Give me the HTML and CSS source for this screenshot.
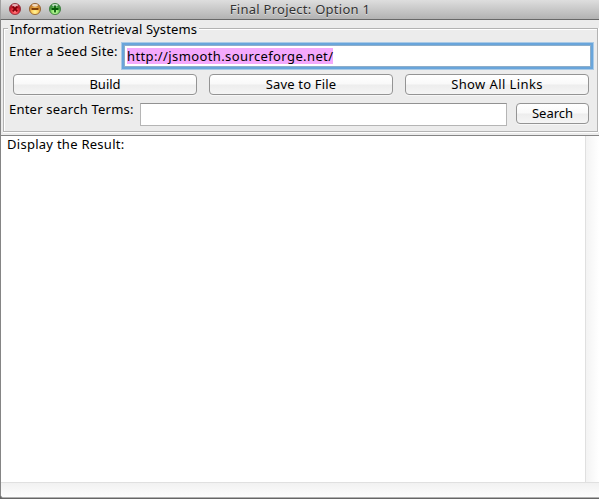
FILE: index.html
```html
<!DOCTYPE html>
<html lang="en">
<head>
<meta charset="utf-8">
<title>Final Project: Option 1</title>
<link rel="stylesheet" href="styles.css">
</head>
<body>
<div class="window">
  <header class="titlebar">
    <div class="controls">
      <svg viewBox="0 0 14 14"><defs>
        <radialGradient id="r" cy=".75"><stop offset="0" stop-color="#ff8484"/><stop offset=".6" stop-color="#ee3642"/><stop offset="1" stop-color="#b81c2c"/></radialGradient>
        <radialGradient id="y" cy=".75"><stop offset="0" stop-color="#fff49c"/><stop offset=".6" stop-color="#fccf5c"/><stop offset="1" stop-color="#cd8430"/></radialGradient>
        <radialGradient id="g" cy=".75"><stop offset="0" stop-color="#d0ffa8"/><stop offset=".6" stop-color="#88e06c"/><stop offset="1" stop-color="#3c9440"/></radialGradient></defs>
        <circle cx="7" cy="7" r="5.6" fill="url(#r)" stroke="#8d3038" stroke-width=".8"/><ellipse cx="7" cy="3.3" rx="3" ry="1.4" fill="#fff" opacity=".65"/><path d="M4.7 4.7l4.6 4.6M9.3 4.7L4.7 9.3" stroke="#7d0008" stroke-width="1.8"/></svg>
      <svg viewBox="0 0 14 14"><circle cx="7" cy="7" r="5.6" fill="url(#y)" stroke="#8c5929" stroke-width=".8"/><ellipse cx="7" cy="3.3" rx="3" ry="1.4" fill="#fff" opacity=".7"/><path d="M3.5 7h7" stroke="#733000" stroke-width="1.8"/></svg>
      <svg viewBox="0 0 14 14"><circle cx="7" cy="7" r="5.6" fill="url(#g)" stroke="#38783a" stroke-width=".8"/><ellipse cx="7" cy="3.3" rx="3" ry="1.4" fill="#fff" opacity=".7"/><path d="M3.5 7h7M7 3.5v7" stroke="#075b0c" stroke-width="1.8"/></svg>
    </div>
    <h1 class="title">Final Project: Option 1</h1>
  </header>
  <main class="content">
    <section class="group">
      <h2 class="legend"><span class="t-legend">Information Retrieval Systems</span></h2>
      <div class="row seed-row">
        <label class="seed-label">Enter a Seed Site:</label>
        <div class="seed-field"><span class="selection">http://jsmooth.sourceforge.net/</span></div>
      </div>
      <div class="row button-row">
        <button class="btn t-build">Build</button>
        <button class="btn t-save">Save to File</button>
        <button class="btn t-links">Show All Links</button>
      </div>
      <div class="row search-row">
        <label class="search-label">Enter search Terms:</label>
        <div class="search-field"></div>
        <button class="btn btn-search t-search">Search</button>
      </div>
    </section>
    <section class="results">
      <div class="output"><span class="t-result">Display the Result:</span></div>
      <div class="track-v"></div>
      <div class="track-h"></div>
    </section>
  </main>
</div>
</body>
</html>
```
FILE: styles.css
```css
* { box-sizing: border-box; }
body {
  margin: 0;
  width: 599px;
  height: 499px;
  overflow: hidden;
  background: #666;
  color: #000;
  font: 13px/16px "Noto Sans", sans-serif;
}
.window { height: 499px; display: flex; flex-direction: column; }
.titlebar {
  height: 20px;
  flex: none;
  display: grid;
  grid-template-columns: 100px 1fr 100px;
  background: linear-gradient(#dedede, #b2b2b2);
  border-bottom: 1px solid #686868;
  border-left: 1px solid #a0a0a0;
}
.controls { display: flex; gap: 6px; padding: 2px 0 0 7px; }
.controls svg { width: 14px; height: 14px; flex: none; }
.title {
  margin: 0;
  padding-top: 1px;
  font-size: 13px;
  font-weight: 400;
  line-height: 16px;
  letter-spacing: .26px;
  text-align: center;
  color: #333;
  text-shadow: 0 1px 0 rgba(255, 255, 255, .5);
  white-space: nowrap;
}
.content {
  flex: 1;
  display: flex;
  flex-direction: column;
  min-height: 0;
  margin-bottom: 1px;
  border-left: 1px solid #858585;
  border-bottom: 1px solid #b0b0b0;
  border-radius: 0 0 0 4px;
  background: #ececec;
  overflow: hidden;
}
.group {
  flex: none;
  height: 104px;
  margin: 8px 1px 3px 2px;
  border: 1px solid #b3b3b3;
  box-shadow: inset 1px 1px #fff, 0 1px #fff, 1px 0 #fff;
}
.legend {
  height: 14px;
  margin: -7px 0 0 4px;
  font-size: 13px;
  font-weight: 400;
  line-height: 14px;
}
.legend span { display: inline-block; background: #ececec; padding: 0 2px; letter-spacing: .11px; }
.row { display: flex; white-space: nowrap; }
.seed-row { height: 27px; margin: 8px 6px 0 5px; }
.seed-label { width: 115px; flex: none; margin-top: -1px; letter-spacing: .15px; }
.seed-field {
  flex: 1;
  height: 22px;
  margin: 1px 0 0;
  padding: 2px;
  border: 1px solid #8daeca;
  background: #fff;
  box-shadow: 0 0 0 2px #69a5db, 0 0 0 3px #a9cae6;
}
.selection { display: inline-block; height: 16px; line-height: 16px; background: #f4a9fc; letter-spacing: .39px; }
.button-row { gap: 12px; margin: 3px 8px 0 9px; }
.btn {
  flex: 1;
  height: 21px;
  padding: 0 0 1px;
  border: 1px solid #949494;
  border-radius: 4px;
  background: linear-gradient(#fff 0, #f9f9f9 48%, #ededed 52%, #f5f5f5);
  color: #000;
  font: 13px/18px "Noto Sans", sans-serif;
  box-shadow: 0 1px 0 rgba(255, 255, 255, .6);
}
.t-save { letter-spacing: .17px; }
.t-links { letter-spacing: .4px; }
.search-row { margin: 8px 8px 0 5px; }
.search-label { width: 131px; flex: none; margin-top: -2px; letter-spacing: .22px; }
.search-field {
  flex: 1;
  height: 23px;
  margin-right: 9px;
  border: 1px solid #b5b5b5;
  border-top-color: #929292;
  background: #fff;
}
.btn-search { flex: 0 0 73px; }
.results {
  flex: 1;
  min-height: 0;
  display: grid;
  grid-template: 1fr 15px / 1fr 14px;
  border-top: 1px solid #858585;
  background: #fff;
}
.output { padding: 0 6px; background: #fff; letter-spacing: .27px; }
.track-v { border-left: 1px solid #e0e0e0; background: linear-gradient(90deg, #f3f3f3, #fff); }
.track-h { grid-column: 1 / 3; border-top: 1px solid #e0e0e0; background: linear-gradient(#f1f1f1, #fdfdfd); }
```
